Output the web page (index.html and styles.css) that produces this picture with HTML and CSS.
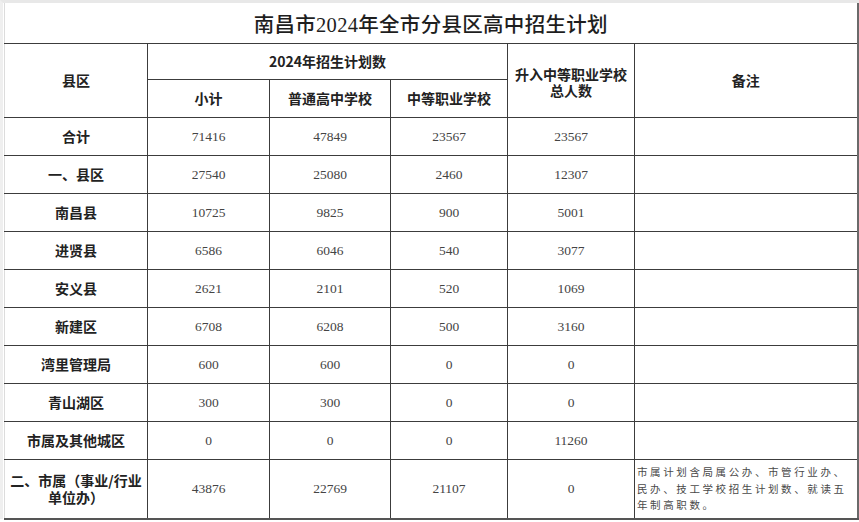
FILE: index.html
```html
<!DOCTYPE html>
<html lang="zh-CN">
<head>
<meta charset="utf-8">
<title>南昌市2024年全市分县区高中招生计划</title>
<link rel="stylesheet" href="styles.css">
</head>
<body>
<div class="sheet">
<table class="plan">
  <colgroup>
    <col class="c1"><col class="c2"><col class="c3"><col class="c4"><col class="c5"><col class="c6">
  </colgroup>
  <tr class="r-title"><td colspan="6" class="title">南昌市2024年全市分县区高中招生计划</td></tr>
  <tr class="r-h1">
    <th rowspan="2" class="first">县区</th>
    <th colspan="3">2024年招生计划数</th>
    <th rowspan="2" class="two"><span class="ln">升入中等职业学校</span><span class="ln">总人数</span></th>
    <th rowspan="2" class="last">备注</th>
  </tr>
  <tr class="r-h2">
    <th>小计</th><th>普通高中学校</th><th>中等职业学校</th>
  </tr>
  <tr class="r"><th class="first">合计</th><td>71416</td><td>47849</td><td>23567</td><td>23567</td><td class="last"></td></tr>
  <tr class="r"><th class="first">一、县区</th><td>27540</td><td>25080</td><td>2460</td><td>12307</td><td class="last"></td></tr>
  <tr class="r"><th class="first">南昌县</th><td>10725</td><td>9825</td><td>900</td><td>5001</td><td class="last"></td></tr>
  <tr class="r"><th class="first">进贤县</th><td>6586</td><td>6046</td><td>540</td><td>3077</td><td class="last"></td></tr>
  <tr class="r"><th class="first">安义县</th><td>2621</td><td>2101</td><td>520</td><td>1069</td><td class="last"></td></tr>
  <tr class="r"><th class="first">新建区</th><td>6708</td><td>6208</td><td>500</td><td>3160</td><td class="last"></td></tr>
  <tr class="r"><th class="first">湾里管理局</th><td>600</td><td>600</td><td>0</td><td>0</td><td class="last"></td></tr>
  <tr class="r"><th class="first">青山湖区</th><td>300</td><td>300</td><td>0</td><td>0</td><td class="last"></td></tr>
  <tr class="r"><th class="first">市属及其他城区</th><td>0</td><td>0</td><td>0</td><td>11260</td><td class="last"></td></tr>
  <tr class="r-end"><th class="first">二、市属（事业/行业单位办）</th><td>43876</td><td>22769</td><td>21107</td><td>0</td><td class="last note">市属计划含局属公办、市管行业办、民办、技工学校招生计划数、就读五年制高职数。</td></tr>
</table>
</div>
</body>
</html>
```
FILE: styles.css
```css
html, body {
  margin: 0;
  padding: 0;
  background: #ffffff;
}
body {
  width: 859px;
  height: 522px;
  overflow: hidden;
  font-family: "Noto Sans CJK SC", sans-serif;
}
.sheet {
  border-top: 3px solid #e8e8e8;
  border-left: 3px solid #efefef;
  padding-left: 1px;
  height: 519px;
  box-sizing: border-box;
  background: #fff;
}
.plan {
  border-collapse: collapse;
  table-layout: fixed;
  width: 853px;
}
.c1 { width: 143px; }
.c2 { width: 122px; }
.c3 { width: 121px; }
.c4 { width: 117px; }
.c5 { width: 127px; }
.c6 { width: 223px; }

.plan td, .plan th {
  border: 1px solid #3c3c3c;
  padding: 0;
  text-align: center;
  vertical-align: middle;
}
.plan .first { border-left: 1px solid #dcdcdc; }
.plan .last { border-right: 2px solid #6a6a6a; }

.plan td.title {
  height: 40px;
  border-top: none;
  border-left: 1px solid #dcdcdc;
  border-right: 2px solid #6a6a6a;
  font-family: "Liberation Serif", "Noto Sans CJK SC", serif;
  font-size: 20.5px;
  font-weight: 500;
  color: #1e1e1e;
  letter-spacing: 0.3px;
}
.r-h1 th { height: 35px; }
.r-h2 th { height: 37px; }
.plan th {
  font-family: "Noto Sans CJK SC", sans-serif;
  font-size: 14px;
  font-weight: 700;
  color: #222;
  line-height: 15px;
}
.plan th.two { line-height: 16px; }
.ln { display: block; }
.r-h1 th:nth-child(3) { padding-top: 3px; }
.r th, .r td { height: 37px; }
.plan td {
  font-family: "Liberation Serif", "Noto Sans CJK SC", serif;
  font-size: 13.5px;
  color: #444;
}
.r-end th, .r-end td {
  height: 58px;
  border-bottom: 2px solid #555;
}
.r-end th {
  line-height: 17px;
  padding: 0 4px;
}
.plan td.note {
  text-align: left;
  font-family: "Noto Sans CJK SC", sans-serif;
  font-size: 10.5px;
  letter-spacing: 2.6px;
  line-height: 16.5px;
  color: #4a4a4a;
  padding: 0 0 0 2px;
}
```
